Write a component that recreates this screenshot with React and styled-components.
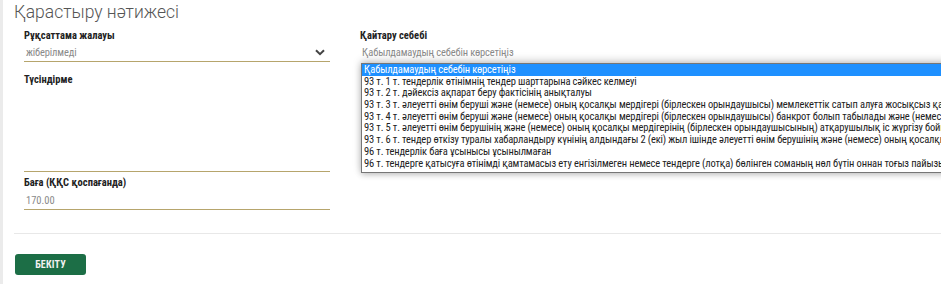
import React from "react";
import styled, { createGlobalStyle } from "styled-components";

const Global = createGlobalStyle`
  html, body { margin: 0; padding: 0; background: #fff; }
  body { font-family: Roboto, "Noto Sans", Arial, sans-serif; }
`;

const Page = styled.div`
  width: 941px;
  height: 284px;
  overflow: hidden;
  box-sizing: border-box;
  border-left: 3px solid #ebebeb;
  background: #fff;
`;

const Card = styled.div`
  padding: 1px 0 0 11px;
`;

const Title = styled.h2`
  margin: 0;
  font-size: 17.5px;
  line-height: 22px;
  font-weight: 300;
  color: #555;
`;

const FormGrid = styled.div`
  display: grid;
  grid-template-columns: 306px 306px;
  column-gap: 30px;
  padding-left: 10px;
  margin-top: 6px;
  align-items: start;
`;

const Column = styled.div`
  display: flex;
  flex-direction: column;
`;

const Field = styled.div`
  position: relative;
  display: flex;
  flex-direction: column;
  margin-top: ${(p) => p.$mt || 0}px;
`;

const Label = styled.div`
  font-size: 10.5px;
  font-stretch: 72%;
  line-height: 13px;
  font-weight: 700;
  color: #222;
`;

const SelectBox = styled.div`
  display: flex;
  align-items: center;
  justify-content: space-between;
  height: 18px;
  margin-top: 1px;
  padding: 0 5px 0 2px;
  border-bottom: 1px solid ${(p) => (p.$hidden ? "transparent" : "#b6a56c")};
  font-size: 10.5px;
  font-stretch: 84%;
  letter-spacing: -0.15px;
  color: #8a8a8a;
`;

const TextArea = styled.div`
  height: 85px;
  border-bottom: 1px solid #b6a56c;
`;

const InputBox = styled.div`
  height: 17px;
  line-height: 17px;
  margin-top: 3px;
  padding-left: 2px;
  border-bottom: 1px solid #b6a56c;
  font-size: 10.5px;
  font-stretch: 84%;
  color: #8a8a8a;
`;

const Divider = styled.hr`
  margin: 23px 0 0 0;
  border: 0;
  border-top: 1px solid #e8e8e8;
`;

const Button = styled.button`
  margin-top: 20px;
  margin-left: 1px;
  width: 71px;
  height: 21px;
  border: 0;
  border-radius: 3px;
  background: #1c6e46;
  color: #f2f2f2;
  font-family: Roboto, Arial, sans-serif;
  font-stretch: 80%;
  font-weight: 700;
  font-size: 10px;
  letter-spacing: 0.2px;
  cursor: pointer;
`;

const Popup = styled.div`
  position: absolute;
  top: 34px;
  left: 1px;
  width: 900px;
  background: #fff;
  border: 1px solid #767676;
  box-shadow: 0 -2px 8px rgba(0, 0, 0, 0.22), 0 2px 6px rgba(0, 0, 0, 0.18);
  padding-bottom: 3px;
  z-index: 5;
`;

const Option = styled.div`
  height: 11.7px;
  line-height: 11.7px;
  padding-left: 2px;
  font-size: 10.5px;
  font-stretch: 79%;
  letter-spacing: -0.15px;
  white-space: nowrap;
  color: ${(p) => (p.$active ? "#fff" : "#222")};
  background: ${(p) => (p.$active ? "#1e90ff" : "transparent")};
`;

const Chevron = () => (
  <svg width="10" height="7" viewBox="0 0 10 7">
    <path d="M1 1.2 L5 5.2 L9 1.2" fill="none" stroke="#444" strokeWidth="2" />
  </svg>
);

const options = [
  "Қабылдамаудың себебін көрсетіңіз",
  "93 т. 1 т. тендерлік өтінімнің тендер шарттарына сәйкес келмеуі",
  "93 т. 2 т. дәйексіз ақпарат беру фактісінің анықталуы",
  "93 т. 3 т. әлеуетті өнім беруші және (немесе) оның қосалқы мердігері (бірлескен орындаушысы) мемлекеттік сатып алуға жосықсыз қатысушылардың тізіліміне енгізілген",
  "93 т. 4 т. әлеуетті өнім беруші және (немесе) оның қосалқы мердігері (бірлескен орындаушысы) банкрот болып табылады және (немесе) таратылу рәсімінде тұр",
  "93 т. 5 т. әлеуетті өнім берушінің және (немесе) оның қосалқы мердігерінің (бірлескен орындаушысының) атқарушылық іс жүргізу бойынша берешегі бар",
  "93 т. 6 т. тендер өткізу туралы хабарландыру күнінің алдындағы 2 (екі) жыл ішінде әлеуетті өнім берушінің және (немесе) оның қосалқы мердігерінің",
  "96 т. тендерлік баға ұсынысы ұсынылмаған",
  "96 т. тендерге қатысуға өтінімді қамтамасыз ету енгізілмеген немесе тендерге (лотқа) бөлінген соманың нөл бүтін оннан тоғыз пайызы мөлшерінде",
];

export default function App() {
  return (
    <>
      <Global />
      <Page>
        <Card>
          <Title>Қарастыру нәтижесі</Title>
          <FormGrid>
            <Column>
              <Field>
                <Label>Рұқсаттама жалауы</Label>
                <SelectBox>
                  <span>жіберілмеді</span>
                  <Chevron />
                </SelectBox>
              </Field>
              <Field $mt={11}>
                <Label>Түсіндірме</Label>
                <TextArea />
              </Field>
              <Field $mt={4}>
                <Label>Баға (ҚҚС қоспағанда)</Label>
                <InputBox>170.00</InputBox>
              </Field>
            </Column>
            <Column>
              <Field>
                <Label>Қайтару себебі</Label>
                <SelectBox $hidden>
                  <span>Қабылдамаудың себебін көрсетіңіз</span>
                </SelectBox>
                <Popup>
                  {options.map((o, i) => (
                    <Option key={i} $active={i === 0}>
                      {o}
                    </Option>
                  ))}
                </Popup>
              </Field>
            </Column>
          </FormGrid>
          <Divider />
          <Button>БЕКІТУ</Button>
        </Card>
      </Page>
    </>
  );
}
